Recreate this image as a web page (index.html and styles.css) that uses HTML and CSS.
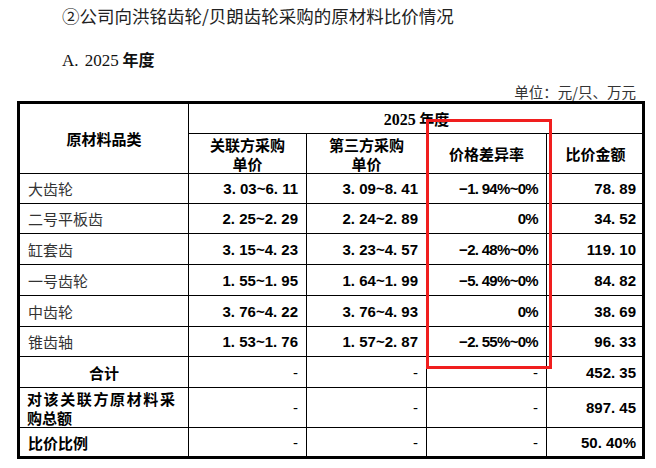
FILE: index.html
```html
<!DOCTYPE html>
<html lang="zh-CN">
<head>
<meta charset="utf-8">
<title>原材料比价情况</title>
<link rel="stylesheet" href="styles.css">
</head>
<body>
<div class="page">
  <p class="title">②公司向洪铭齿轮/贝朗齿轮采购的原材料比价情况</p>
  <p class="heading"><span class="latin">A. 2025</span> <b class="hei">年度</b></p>
  <p class="unit">单位：元/只、万元</p>
  <div class="table-wrap">
    <div class="frame">
      <table class="grid">
        <colgroup>
          <col class="c1"><col class="c2"><col class="c3"><col class="c4"><col class="c5">
        </colgroup>
        <tr class="r-h1">
          <th rowspan="2" class="center">原材料品类</th>
          <th colspan="4" class="center year last"><span class="latin">2025</span> 年度</th>
        </tr>
        <tr class="r-h2">
          <th class="center">关联方采购<br>单价</th>
          <th class="center">第三方采购<br>单价</th>
          <th class="center">价格差异率</th>
          <th class="center last">比价金额</th>
        </tr>
        <tr class="r30">
          <td class="label">大齿轮</td><td class="num">3. 03~6. 11</td><td class="num">3. 09~8. 41</td><td class="num pct">−1. 94%~0%</td><td class="num last">78. 89</td>
        </tr>
        <tr class="r30">
          <td class="label">二号平板齿</td><td class="num">2. 25~2. 29</td><td class="num">2. 24~2. 89</td><td class="num pct">0%</td><td class="num last">34. 52</td>
        </tr>
        <tr class="r31">
          <td class="label">缸套齿</td><td class="num">3. 15~4. 23</td><td class="num">3. 23~4. 57</td><td class="num pct">−2. 48%~0%</td><td class="num last">119. 10</td>
        </tr>
        <tr class="r31">
          <td class="label">一号齿轮</td><td class="num">1. 55~1. 95</td><td class="num">1. 64~1. 99</td><td class="num pct">−5. 49%~0%</td><td class="num last">84. 82</td>
        </tr>
        <tr class="r31">
          <td class="label">中齿轮</td><td class="num">3. 76~4. 22</td><td class="num">3. 76~4. 93</td><td class="num pct">0%</td><td class="num last">38. 69</td>
        </tr>
        <tr class="r30">
          <td class="label">锥齿轴</td><td class="num">1. 53~1. 76</td><td class="num">1. 57~2. 87</td><td class="num pct">−2. 55%~0%</td><td class="num last">96. 33</td>
        </tr>
        <tr class="r31">
          <th class="center">合计</th><td class="dash">-</td><td class="dash">-</td><td class="dash">-</td><td class="num last">452. 35</td>
        </tr>
        <tr class="r40">
          <th class="justify">对该关联方原材料采购总额</th><td class="dash">-</td><td class="dash">-</td><td class="dash">-</td><td class="num last">897. 45</td>
        </tr>
        <tr class="r28 end">
          <th class="left">比价比例</th><td class="dash">-</td><td class="dash">-</td><td class="dash">-</td><td class="num last">50. 40%</td>
        </tr>
      </table>
    </div>
    <div class="highlight"></div>
  </div>
</div>
</body>
</html>
```

FILE: styles.css
```css
body {
  margin: 0;
  background: #fff;
  color: #000;
  font-family: "Noto Sans CJK SC", sans-serif;
}

.page {
  padding: 4px 11px 0 17px;
}

p {
  margin: 0;
}

.title {
  height: 24px;
  margin-left: 45px;
  font-size: 17.5px;
  line-height: 24px;
  color: #222;
}

.heading {
  height: 24px;
  margin: 19px 0 0 45px;
  font-size: 16px;
  line-height: 24px;
  color: #111;
}

.latin {
  font-family: "Liberation Serif", serif;
}

.heading .latin {
  word-spacing: 2px;
  font-size: 17px;
}

.hei {
  font-weight: 700;
}

.unit {
  height: 19px;
  margin-top: 11px;
  padding-right: 9px;
  text-align: right;
  font-size: 14.5px;
  line-height: 19px;
  color: #333;
}

.table-wrap {
  position: relative;
  width: 628px;
}

.frame {
  border: 3px solid #000;
}

.grid {
  width: 622px;
  table-layout: fixed;
  border-collapse: separate;
  border-spacing: 0;
}

.c1 { width: 169px; }
.c2 { width: 118px; }
.c3 { width: 120px; }
.c4 { width: 120px; }
.c5 { width: 95px; }

.grid th,
.grid td {
  box-sizing: border-box;
  border-right: 1px solid #000;
  border-bottom: 1px solid #000;
  padding: 0 8px;
  font-size: 15px;
  line-height: 19px;
  vertical-align: middle;
}

.grid .last {
  border-right: 0;
}

.grid .end th,
.grid .end td {
  border-bottom: 0;
}

.grid th {
  font-weight: 700;
}

.r-h1 { height: 30px; }
.r-h2 { height: 40px; }
.r28 { height: 28px; }
.r30 { height: 30px; }
.r31 { height: 31px; }
.r40 { height: 40px; }

.center {
  text-align: center;
}

.left {
  text-align: left;
  padding-left: 7px;
}

.year .latin {
  font-weight: 700;
  font-size: 16px;
}

.label {
  text-align: left;
  color: #333;
  padding-left: 7px;
}

.grid .justify {
  text-align: justify;
  padding-left: 7px;
  padding-right: 13px;
}

.num {
  text-align: right;
  font-family: "Liberation Sans", sans-serif;
  font-weight: 700;
  font-size: 14px;
}

.pct {
  letter-spacing: -0.7px;
}

.grid .last {
  padding-right: 6px;
}

.dash {
  text-align: right;
  font-family: "Liberation Sans", sans-serif;
  font-size: 14px;
  padding-right: 12px;
}

.highlight {
  position: absolute;
  left: 409px;
  top: 18px;
  width: 126px;
  height: 250px;
  box-sizing: border-box;
  border: 3px solid #f01e1e;
}
```
